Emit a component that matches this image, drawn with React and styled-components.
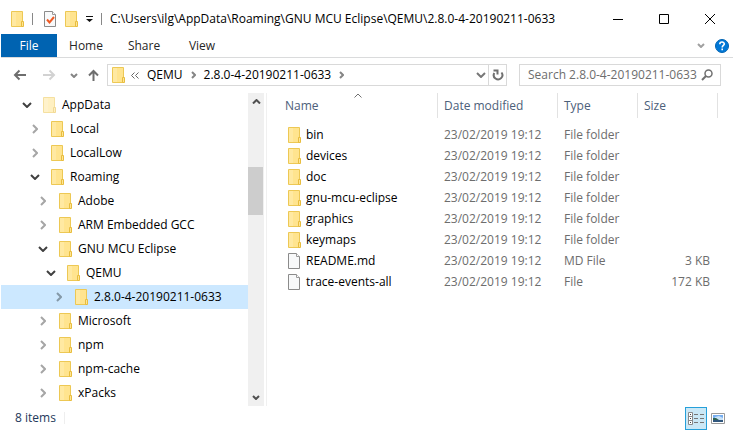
import React from "react";
import styled, { createGlobalStyle, css } from "styled-components";

const GlobalStyle = createGlobalStyle`
  * { box-sizing: border-box; }
  body { margin: 0; background: #fff; }
  body, button, input {
    font-family: "Open Sans", "Noto Sans", sans-serif;
    font-size: 12px;
    line-height: 16px;
  }
  button { margin: 0; padding: 0; border: 0; background: none; color: inherit; }
  svg { display: block; flex: none; }
`;

const Window = styled.div`
  display: flex;
  flex-direction: column;
  min-height: 100vh;
  padding: 0 1px;
  background: #fff;
  color: #000;
`;

const TitleBar = styled.header`
  display: flex;
  align-items: center;
  height: 34px;
  padding: 3px 0 0 10px;
`;

const QuickAccess = styled.div`
  display: flex;
  align-items: center;
  gap: 8px;
`;

const QuickButton = styled.button`
  display: flex;
  align-items: center;
  justify-content: center;
  width: ${(p) => (p.$narrow ? "7px" : "13px")};
  margin-left: ${(p) => (p.$spaced ? "3px" : "0")};
`;

const Divider = styled.span`
  width: 1px;
  height: 12px;
  background: #888;
`;

const Title = styled.h1`
  flex: 1;
  min-width: 0;
  margin: 0 0 0 8px;
  overflow: hidden;
  font-size: 12px;
  font-weight: 400;
  white-space: nowrap;
`;

const CaptionButton = styled.button`
  display: flex;
  flex: none;
  align-items: center;
  justify-content: center;
  width: 46px;
  height: 30px;
`;

const Ribbon = styled.nav`
  display: flex;
  align-items: stretch;
  height: 24px;
  border-bottom: 1px solid #dadbdc;
`;

const Tab = styled.button`
  width: 58px;
  color: #262626;
  ${(p) => p.$active && css`
    width: 56px;
    background: #0063b1;
    color: #fff;
  `}
`;

const RibbonTools = styled.div`
  display: flex;
  align-items: center;
  gap: 10px;
  margin-left: auto;
  padding-right: 4px;
`;

const AddressRow = styled.div`
  display: flex;
  align-items: center;
  height: 35px;
  padding: 0 12px 1px 12px;
`;

const NavButtons = styled.div`
  display: grid;
  flex: none;
  grid-template-columns: 30px 27px 18px 19px;
  align-items: center;
  justify-items: start;
`;

const AddressBox = styled.div`
  display: flex;
  flex: 1;
  align-items: center;
  height: 22px;
  min-width: 0;
  border: 1px solid #d9d9d9;
  padding-left: 4px;
`;

const Crumb = styled.button`
  margin: 0 8px;
  white-space: nowrap;
`;

const ParentsButton = styled.button`
  margin-left: 6px;
`;

const DropButton = styled.button`
  margin-left: auto;
  padding-right: 2px;
`;

const RefreshButton = styled.button`
  display: flex;
  flex: none;
  align-items: center;
  justify-content: center;
  width: 18px;
  height: 22px;
  border: 1px solid #d9d9d9;
  border-left: 0;
`;

const SearchBox = styled.label`
  display: flex;
  flex: none;
  align-items: center;
  width: 202px;
  height: 22px;
  margin-left: 12px;
  border: 1px solid #d9d9d9;
  padding: 0 7px 0 8px;
`;

const SearchInput = styled.input`
  flex: 1;
  min-width: 0;
  padding: 0;
  border: 0;
  outline: 0;
  background: none;
  &::placeholder { color: #6d6d6d; opacity: 1; }
`;

const Body = styled.div`
  display: flex;
  flex: 1;
`;

const TreePane = styled.aside`
  display: flex;
  flex: none;
  width: 266px;
  border-right: 1px solid #f0f0f0;
`;

const Tree = styled.ul`
  flex: 1;
  margin: 0;
  padding: 0;
  list-style: none;
`;

const TreeRow = styled.li`
  display: flex;
  align-items: center;
  height: 24px;
  padding-left: ${(p) => 18 + p.$level * 8}px;
  background: ${(p) => (p.$selected ? "#cce8ff" : "transparent")};
`;

const Expander = styled.button`
  display: flex;
  justify-content: center;
  width: 16px;
  margin-right: 8px;
`;

const TreeLabel = styled.button`
  display: flex;
  align-items: center;
  gap: 6px;
  white-space: nowrap;
`;

const ScrollBar = styled.div`
  display: flex;
  flex-direction: column;
  width: 16px;
  margin-right: 2px;
  background: #f0f0f0;
`;

const ScrollButton = styled.button`
  display: flex;
  align-items: center;
  justify-content: center;
  height: 17px;
`;

const ScrollTrack = styled.div`
  flex: 1;
  padding-top: 57px;
`;

const ScrollThumb = styled.div`
  width: 15px;
  height: 48px;
  background: #cdcdcd;
`;

const FilePane = styled.main`
  flex: 1;
  min-width: 0;
  padding: 0 15px 0 12px;
`;

const FileTable = styled.table`
  width: 100%;
  table-layout: fixed;
  border-collapse: separate;
  border-spacing: 0;
`;

const Column = styled.col`
  width: ${(p) => p.$width};
`;

const HeadCell = styled.th`
  position: relative;
  height: 25px;
  padding: 0 6px;
  border-right: 1px solid #e2e2e2;
  color: #4c607a;
  font-weight: 400;
  text-align: left;
`;

const SortMark = styled.span`
  position: absolute;
  top: 0;
  left: 50%;
  transform: translateX(-50%);
`;

const TableBody = styled.tbody`
  &::before {
    content: "";
    display: table-row;
    height: 6px;
  }
`;

const Cell = styled.td`
  height: 21px;
  padding: 0 8px 0 6px;
  color: #6d6d6d;
  text-align: ${(p) => (p.$right ? "right" : "left")};
  white-space: nowrap;
`;

const NameLabel = styled.div`
  display: flex;
  align-items: center;
  gap: 5px;
  padding-left: 3px;
  color: #000;
`;

const StatusBar = styled.footer`
  display: flex;
  align-items: center;
  height: 26px;
  padding: 0 8px 2px 14px;
  color: #1e395b;
`;

const StatusDivider = styled.span`
  width: 1px;
  height: 12px;
  margin-left: 8px;
  background: #eee;
`;

const ViewButtons = styled.div`
  display: flex;
  align-items: center;
  gap: 4px;
  margin-left: auto;
`;

const ViewButton = styled.button`
  display: flex;
  align-items: center;
  justify-content: center;
  ${(p) => p.$active && css`
    width: 22px;
    height: 23px;
    border: 1px solid #26a0da;
    background: #cbe8f6;
  `}
`;

function FolderIcon({ faded }) {
  return (
    <svg width="13" height="16" viewBox="0 0 13 16" opacity={faded ? 0.55 : 1} aria-hidden="true">
      <path d="M.5.5h11v15H.5z" fill="#ffe48f" stroke="#edc854" />
      <path d="M1 1h4v14H1z" fill="#ffe9a2" />
      <path d="M10.5 10.5h2v5h-2z" fill="#ffe594" stroke="#e8bd3f" />
    </svg>
  );
}

function FileIcon({ checked }) {
  return (
    <svg width="13" height="16" viewBox="0 0 13 16" aria-hidden="true">
      <path d="M.5.5h8l3 3v12H.5z" fill="#f8f9fa" stroke="#8b8b8b" />
      <path d="M8.5.5v3h3" fill="#fff" stroke="#9a9a9a" />
      {checked && <path d="M3 8.5l2.5 3L10 6" fill="none" stroke="#ee5a24" strokeWidth="2" />}
    </svg>
  );
}

const chevronPaths = {
  right: ["M1 1l4 4-4 4", 6, 10],
  down: ["M1 1l4 4 4-4", 10, 6],
  smallRight: ["M1 1l3 3-3 3", 5, 8],
  smallDown: ["M1 1l3 3 3-3", 8, 5],
  smallUp: ["M1 4.500l3.500-3.500 3.500 3.500", 9, 5],
};

function Chevron({ kind, color, weight = 2 }) {
  const [d, w, h] = chevronPaths[kind];
  return (
    <svg width={w} height={h} viewBox={`0 0 ${w} ${h}`} fill="none" stroke={color} strokeWidth={weight} aria-hidden="true">
      <path d={d} />
    </svg>
  );
}

function Arrow({ d, color, size = 13 }) {
  return (
    <svg width={size} height="12" viewBox={`0 0 ${size} 12`} fill="none" stroke={color} strokeWidth="2" aria-hidden="true">
      <path d={d} />
    </svg>
  );
}

const treeItems = [
  { name: "AppData", level: 0, open: true, faded: true },
  { name: "Local", level: 1 },
  { name: "LocalLow", level: 1 },
  { name: "Roaming", level: 1, open: true },
  { name: "Adobe", level: 2 },
  { name: "ARM Embedded GCC", level: 2 },
  { name: "GNU MCU Eclipse", level: 2, open: true },
  { name: "QEMU", level: 3, open: true },
  { name: "2.8.0-4-20190211-0633", level: 4, selected: true },
  { name: "Microsoft", level: 2 },
  { name: "npm", level: 2 },
  { name: "npm-cache", level: 2 },
  { name: "xPacks", level: 2 },
];

const files = [
  { name: "bin", type: "File folder" },
  { name: "devices", type: "File folder" },
  { name: "doc", type: "File folder" },
  { name: "gnu-mcu-eclipse", type: "File folder" },
  { name: "graphics", type: "File folder" },
  { name: "keymaps", type: "File folder" },
  { name: "README.md", type: "MD File", size: "3 KB" },
  { name: "trace-events-all", type: "File", size: "172 KB" },
];

export default function App() {
  return (
    <Window>
      <GlobalStyle />
      <TitleBar>
        <QuickAccess>
          <FolderIcon />
          <Divider />
          <QuickButton $spaced aria-label="Properties"><FileIcon checked /></QuickButton>
          <QuickButton aria-label="New folder"><FolderIcon /></QuickButton>
          <QuickButton $narrow aria-label="Customize toolbar">
            <svg width="7" height="6" viewBox="0 0 7 6"><path d="M0 0h7v1H0zM0 3h7L3.500 6z" fill="#111" /></svg>
          </QuickButton>
          <Divider />
        </QuickAccess>
        <Title>C:\Users\ilg\AppData\Roaming\GNU MCU Eclipse\QEMU\2.8.0-4-20190211-0633</Title>
        <CaptionButton aria-label="Minimize">
          <svg width="10" height="10" viewBox="0 0 10 10"><path d="M0 5h10v1H0z" /></svg>
        </CaptionButton>
        <CaptionButton aria-label="Maximize">
          <svg width="10" height="10" viewBox="0 0 10 10"><path d="M.5.5h9v9h-9z" fill="none" stroke="#000" /></svg>
        </CaptionButton>
        <CaptionButton aria-label="Close">
          <svg width="10" height="10" viewBox="0 0 10 10"><path d="M0 0l10 10M10 0L0 10" fill="none" stroke="#000" /></svg>
        </CaptionButton>
      </TitleBar>

      <Ribbon>
        <Tab $active>File</Tab>
        <Tab>Home</Tab>
        <Tab>Share</Tab>
        <Tab>View</Tab>
        <RibbonTools>
          <button aria-label="Expand the ribbon"><Chevron kind="smallDown" color="#a0a0a0" /></button>
          <button aria-label="Help">
            <svg width="14" height="14" viewBox="0 0 14 14">
              <circle cx="7" cy="7" r="6.500" fill="#0078d7" stroke="#0063b1" />
              <path d="M4.800 5.200c0-2.800 4.500-2.800 4.500-.2C9.300 6.500 7.200 6.500 7.200 8.400M7.200 9.600v1.700" fill="none" stroke="#fff" strokeWidth="1.600" />
            </svg>
          </button>
        </RibbonTools>
      </Ribbon>

      <AddressRow>
        <NavButtons>
          <button aria-label="Back"><Arrow color="#6e6e6e" d="M13 6H2M6.500 1.500L2 6l4.500 4.500" /></button>
          <button aria-label="Forward"><Arrow color="#d2d2d2" d="M0 6h11M6.500 1.500L11 6l-4.500 4.500" /></button>
          <button aria-label="Recent locations"><Chevron kind="smallDown" color="#858585" /></button>
          <button aria-label="Up"><Arrow size={11} color="#6e6e6e" d="M5.500 12V2M1 6.500L5.500 2 10 6.500" /></button>
        </NavButtons>
        <AddressBox>
          <FolderIcon />
          <ParentsButton aria-label="Parent folders">
            <svg width="8" height="7" viewBox="0 0 8 7" fill="none" stroke="#666"><path d="M3.500.5l-3 3 3 3M7.500.5l-3 3 3 3" /></svg>
          </ParentsButton>
          <Crumb>QEMU</Crumb>
          <Chevron kind="smallRight" color="#858585" />
          <Crumb>2.8.0-4-20190211-0633</Crumb>
          <Chevron kind="smallRight" color="#858585" />
          <DropButton aria-label="Previous locations"><Chevron kind="down" color="#777" /></DropButton>
        </AddressBox>
        <RefreshButton aria-label="Refresh">
          <svg width="12" height="12" viewBox="0 0 12 12" fill="none" stroke="#707070" strokeWidth="2">
            <path d="M9.500 3.500A4.300 4.300 0 1 1 2.300 4M1.500 1.500H5.500V5.500" />
          </svg>
        </RefreshButton>
        <SearchBox>
          <SearchInput aria-label="Search" placeholder="Search 2.8.0-4-20190211-0633" />
          <svg width="12" height="12" viewBox="0 0 12 12" fill="none" stroke="#707070">
            <circle cx="7.500" cy="4.500" r="3.500" strokeWidth="1.500" />
            <path d="M5 7L1 11" strokeWidth="2" />
          </svg>
        </SearchBox>
      </AddressRow>

      <Body>
        <TreePane>
          <Tree>
            {treeItems.map((item) => (
              <TreeRow key={item.name} $level={item.level} $selected={item.selected}>
                <Expander aria-label={`${item.open ? "Collapse" : "Expand"} ${item.name}`}>
                  <Chevron kind={item.open ? "down" : "right"} color={item.open ? "#404040" : item.selected ? "#8499a8" : "#a6a6a6"} />
                </Expander>
                <TreeLabel><FolderIcon faded={item.faded} />{item.name}</TreeLabel>
              </TreeRow>
            ))}
          </Tree>
          <ScrollBar>
            <ScrollButton aria-label="Scroll up"><Chevron kind="smallUp" color="#505050" /></ScrollButton>
            <ScrollTrack><ScrollThumb /></ScrollTrack>
            <ScrollButton aria-label="Scroll down"><Chevron kind="smallDown" color="#505050" /></ScrollButton>
          </ScrollBar>
        </TreePane>

        <FilePane>
          <FileTable>
            <colgroup>
              <Column $width="auto" />
              <Column $width="120px" />
              <Column $width="80px" />
              <Column $width="80px" />
            </colgroup>
            <thead>
              <tr>
                <HeadCell aria-sort="ascending">Name<SortMark><Chevron kind="smallUp" color="#707070" weight={1} /></SortMark></HeadCell>
                <HeadCell>Date modified</HeadCell>
                <HeadCell>Type</HeadCell>
                <HeadCell>Size</HeadCell>
              </tr>
            </thead>
            <TableBody>
              {files.map((file) => (
                <tr key={file.name}>
                  <Cell><NameLabel>{file.size ? <FileIcon /> : <FolderIcon />}{file.name}</NameLabel></Cell>
                  <Cell>23/02/2019 19:12</Cell>
                  <Cell>{file.type}</Cell>
                  <Cell $right>{file.size}</Cell>
                </tr>
              ))}
            </TableBody>
          </FileTable>
        </FilePane>
      </Body>

      <StatusBar>
        8 items
        <StatusDivider />
        <ViewButtons>
          <ViewButton $active aria-label="Details view">
            <svg width="16" height="13" viewBox="0 0 16 13" fill="none">
              <path d="M.5.5h4v12h-4zM.5 4.500h4M.5 8.500h4" fill="#fff" stroke="#8a8a8a" />
              <path d="M2 2h1v1H2zM2 6h1v1H2zM2 10h1v1H2z" fill="#444" />
              <path d="M6 2.500h4M12 2.500h4M6 6.500h4M12 6.500h4M6 10.500h4M12 10.500h4" stroke="#777" />
            </svg>
          </ViewButton>
          <ViewButton aria-label="Large icons view">
            <svg width="14" height="11" viewBox="0 0 14 11">
              <path d="M.5.5h13v10H.5z" fill="#fff" stroke="#999" />
              <path d="M2 2h10v7H2z" fill="#75adf0" />
              <path d="M4 4l4-1 4 2v2H4z" fill="#c8e2f8" />
              <path d="M2 5l3 0 3 2H2z" fill="#2d6252" />
              <path d="M2 7h10v2H2z" fill="#31577d" />
            </svg>
          </ViewButton>
        </ViewButtons>
      </StatusBar>
    </Window>
  );
}
